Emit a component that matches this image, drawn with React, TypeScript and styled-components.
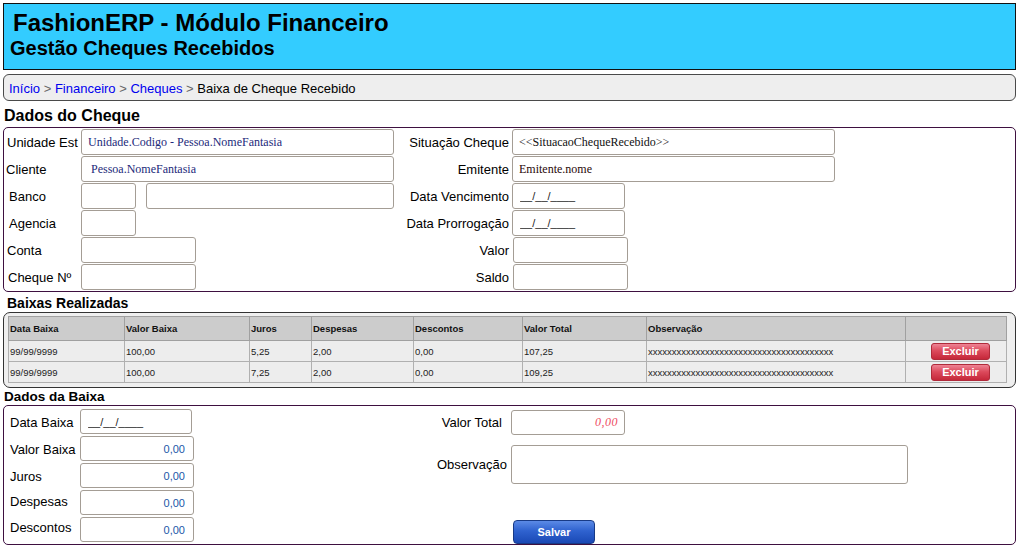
import React from "react";
import styled, { createGlobalStyle, css } from "styled-components";

const GlobalStyle = createGlobalStyle`
  html, body { margin: 0; padding: 0; overflow: hidden; background: #fff; }
  body {
    margin: 3px 0 0 3px;
    font-family: "Liberation Sans", Arial, sans-serif;
    font-size: 13px;
    color: #000;
  }
  * { box-sizing: border-box; }
`;

const Page = styled.div`
  width: 1013px;
  display: flex;
  flex-direction: column;
`;

const Header = styled.header`
  height: 67px;
  background: #33ccff;
  border: 1px solid #111;
  padding: 5px 0 0 6px;
`;

const Title = styled.h1`
  margin: 0 0 0 3px;
  font-size: 24px;
  line-height: 28px;
  font-weight: bold;
`;

const Subtitle = styled.h2`
  margin: 0;
  font-size: 20px;
  line-height: 22px;
  font-weight: bold;
`;

const Breadcrumb = styled.nav`
  margin-top: 4px;
  height: 27px;
  background: #eeeeee;
  border: 1px solid #4a4a4a;
  border-radius: 6px;
  padding: 3px 0 0 5px;
  line-height: 22px;
  font-size: 13px;
  white-space: pre;
`;

const Crumb = styled.a`
  color: #0000ee;
  text-decoration: none;
`;

const Sep = styled.span`
  color: #666;
`;

const SectionTitle = styled.h3<{ $size: number; $pt: number; $lh: number; $pl: number; $h: number }>`
  margin: 0;
  height: ${(p) => p.$h}px;
  font-size: ${(p) => p.$size}px;
  line-height: ${(p) => p.$lh}px;
  padding: ${(p) => p.$pt}px 0 0 ${(p) => p.$pl}px;
  font-weight: bold;
`;

const Panel = styled.section<{ $tone?: "purple" | "gray" }>`
  border: 1px solid #3e1040;
  border-radius: 5px;
  ${(p) =>
    p.$tone === "gray" &&
    css`
      border-color: #333;
      border-radius: 7px;
      background: #efefef;
      padding: 3px 0 4px 4px;
    `}
`;

const ChequeGrid = styled.div`
  display: grid;
  grid-template-columns: 77px 322px 109px 1fr;
  grid-auto-rows: 27px;
  padding-top: 1px;
`;

const FieldLabel = styled.label<{ $align?: "left" | "right"; $indent?: number; $pr?: number; $lift?: number }>`
  display: flex;
  align-items: center;
  justify-content: ${(p) => (p.$align === "right" ? "flex-end" : "flex-start")};
  padding-left: ${(p) => p.$indent ?? 0}px;
  padding-right: ${(p) => p.$pr ?? 0}px;
  height: 26px;
  margin-top: ${(p) => -(p.$lift ?? 0)}px;
  font-size: 13px;
  white-space: nowrap;
`;

const FieldCell = styled.div`
  display: flex;
  gap: 10px;
  align-items: flex-start;
`;

const TextBox = styled.input<{ $w: number; $h?: number; $shift?: number; $tone?: string; $num?: boolean; $serif?: boolean; $date?: boolean }>`
  width: ${(p) => p.$w}px;
  height: ${(p) => p.$h ?? 26}px;
  margin-left: ${(p) => p.$shift ?? 0}px;
  border: 1px solid #a49d95;
  border-radius: 3px;
  background: #fff;
  padding: 0 6px;
  outline: none;
  color: ${(p) => p.$tone ?? "#111"};
  font-family: "Liberation Serif", "Times New Roman", serif;
  font-size: 12px;
  ${(p) =>
    p.$date &&
    css`
      font-family: "Liberation Sans", Arial, sans-serif;
      font-size: 11px;
      padding-left: 7px;
      color: #222;
    `}
  ${(p) =>
    p.$num &&
    css`
      font-family: "Liberation Sans", Arial, sans-serif;
      font-size: 11px;
      text-align: right;
      padding-right: 8px;
      color: #1a58a8;
    `}
  ${(p) =>
    p.$serif &&
    css`
      font-family: "Liberation Serif", "Times New Roman", serif;
      font-style: italic;
      font-size: 12px;
      text-align: right;
      padding-right: 6px;
      color: #ee4d63;
      letter-spacing: 0.5px;
    `}
`;

const Notes = styled.textarea`
  width: 397px;
  height: 39px;
  border: 1px solid #a49d95;
  border-radius: 3px;
  resize: none;
  outline: none;
  margin-top: 9px;
`;

const Table = styled.table`
  width: 999px;
  border-collapse: collapse;
  table-layout: fixed;
  font-family: "Liberation Sans", Arial, sans-serif;
  font-size: 9.5px;
  color: #222;
  border: 1px solid #999;
`;

const Col = styled.col<{ $w: number }>`
  width: ${(p) => p.$w}px;
`;

const HeadCell = styled.th`
  height: 24px;
  background: #cccccc;
  border: 1px solid #a0a0a0;
  text-align: left;
  font-weight: bold;
  padding: 0 1px;
  color: #111;
`;

const Cell = styled.td`
  height: 21px;
  background: #ededed;
  border: 1px solid #b0b0b0;
  padding: 0 1px;
  white-space: nowrap;
  overflow: hidden;
`;

const ActionCell = styled(Cell)`
  text-align: center;
  padding-left: 10px;
`;

const DangerButton = styled.button`
  width: 59px;
  height: 17px;
  border: 1px solid #b02a3a;
  border-radius: 3px;
  background: linear-gradient(#ee8494 0%, #dc4a5c 45%, #c5283a 100%);
  color: #fff;
  font-family: "Liberation Sans", Arial, sans-serif;
  font-weight: bold;
  font-size: 11px;
  line-height: 15px;
  padding: 0;
  vertical-align: middle;
`;

const BaixaLayout = styled.div`
  display: flex;
`;

const BaixaLeft = styled.div`
  width: 407px;
  display: grid;
  grid-template-columns: 76px auto;
  grid-auto-rows: 27px;
  padding-top: 3px;
  justify-items: start;
`;

const BaixaRight = styled.div`
  display: grid;
  grid-template-columns: 100px auto;
  align-items: center;
  justify-items: start;
  padding-top: 4px;
`;

const RightLabel = styled.span<{ $pr: number; $mt?: number }>`
  justify-self: end;
  padding-right: ${(p) => p.$pr}px;
  margin-top: ${(p) => p.$mt ?? 0}px;
  font-size: 13px;
`;

const PrimaryButton = styled.button`
  grid-column: 2;
  margin: 35px 0 0 2px;
  width: 82px;
  height: 24px;
  border: 1px solid #183a86;
  border-radius: 4px;
  background: linear-gradient(#5b8ae6 0%, #2f62cf 45%, #1a49b5 100%);
  color: #fff;
  font-family: "Liberation Sans", Arial, sans-serif;
  font-weight: bold;
  font-size: 11px;
  padding: 0;
`;

const rows = [
  { data: "99/99/9999", valor: "100,00", juros: "5,25", desp: "2,00", desc: "0,00", total: "107,25" },
  { data: "99/99/9999", valor: "100,00", juros: "7,25", desp: "2,00", desc: "0,00", total: "109,25" },
];

const obs = "x".repeat(39);

export default function App() {
  return (
    <>
      <GlobalStyle />
      <Page>
        <Header>
          <Title>FashionERP - Módulo Financeiro</Title>
          <Subtitle>Gestão Cheques Recebidos</Subtitle>
        </Header>

        <Breadcrumb>
          <Crumb href="#">Início</Crumb>
          <Sep>{" > "}</Sep>
          <Crumb href="#">Financeiro</Crumb>
          <Sep>{" > "}</Sep>
          <Crumb href="#">Cheques</Crumb>
          <Sep>{" > "}</Sep>
          <span>Baixa de Cheque Recebido</span>
        </Breadcrumb>

        <SectionTitle $size={16} $pt={3} $lh={23} $pl={1} $h={26}>Dados do Cheque</SectionTitle>
        <Panel>
          <ChequeGrid>
            <FieldLabel $indent={3}>Unidade Est</FieldLabel>
            <FieldCell>
              <TextBox $w={313} $tone="#1c2a7a" readOnly defaultValue="Unidade.Codigo - Pessoa.NomeFantasia" />
            </FieldCell>
            <FieldLabel $align="right" $pr={3}>Situação Cheque</FieldLabel>
            <FieldCell>
              <TextBox $w={323} readOnly defaultValue="<<SituacaoChequeRecebido>>" />
            </FieldCell>

            <FieldLabel $indent={2}>Cliente</FieldLabel>
            <FieldCell>
              <TextBox $w={313} $tone="#1c2a7a" readOnly defaultValue=" Pessoa.NomeFantasia" />
            </FieldCell>
            <FieldLabel $align="right" $pr={3}>Emitente</FieldLabel>
            <FieldCell>
              <TextBox $w={323} $tone="#2a0808" readOnly defaultValue="Emitente.nome" />
            </FieldCell>

            <FieldLabel $indent={5}>Banco</FieldLabel>
            <FieldCell>
              <TextBox $w={55} readOnly />
              <TextBox $w={248} readOnly />
            </FieldCell>
            <FieldLabel $align="right" $pr={3}>Data Vencimento</FieldLabel>
            <FieldCell>
              <TextBox $w={113} $date readOnly defaultValue="__/__/____" />
            </FieldCell>

            <FieldLabel $indent={5}>Agencia</FieldLabel>
            <FieldCell>
              <TextBox $w={55} readOnly />
            </FieldCell>
            <FieldLabel $align="right" $pr={3}>Data Prorrogação</FieldLabel>
            <FieldCell>
              <TextBox $w={113} $date readOnly defaultValue="__/__/____" />
            </FieldCell>

            <FieldLabel $indent={3}>Conta</FieldLabel>
            <FieldCell>
              <TextBox $w={115} readOnly />
            </FieldCell>
            <FieldLabel $align="right" $pr={3}>Valor</FieldLabel>
            <FieldCell>
              <TextBox $w={115} $shift={1} readOnly />
            </FieldCell>

            <FieldLabel $indent={4}>Cheque Nº</FieldLabel>
            <FieldCell>
              <TextBox $w={115} readOnly />
            </FieldCell>
            <FieldLabel $align="right" $pr={3}>Saldo</FieldLabel>
            <FieldCell>
              <TextBox $w={115} $shift={1} readOnly />
            </FieldCell>
          </ChequeGrid>
        </Panel>

        <SectionTitle $size={14} $pt={2} $lh={18} $pl={4} $h={20}>Baixas Realizadas</SectionTitle>
        <Panel $tone="gray">
          <Table>
            <colgroup>
              <Col $w={116} />
              <Col $w={125} />
              <Col $w={62} />
              <Col $w={102} />
              <Col $w={109} />
              <Col $w={124} />
              <Col $w={259} />
              <Col $w={101} />
            </colgroup>
            <thead>
              <tr>
                <HeadCell>Data Baixa</HeadCell>
                <HeadCell>Valor Baixa</HeadCell>
                <HeadCell>Juros</HeadCell>
                <HeadCell>Despesas</HeadCell>
                <HeadCell>Descontos</HeadCell>
                <HeadCell>Valor Total</HeadCell>
                <HeadCell>Observação</HeadCell>
                <HeadCell></HeadCell>
              </tr>
            </thead>
            <tbody>
              {rows.map((r, i) => (
                <tr key={i}>
                  <Cell>{r.data}</Cell>
                  <Cell>{r.valor}</Cell>
                  <Cell>{r.juros}</Cell>
                  <Cell>{r.desp}</Cell>
                  <Cell>{r.desc}</Cell>
                  <Cell>{r.total}</Cell>
                  <Cell>{obs}</Cell>
                  <ActionCell>
                    <DangerButton type="button">Excluir</DangerButton>
                  </ActionCell>
                </tr>
              ))}
            </tbody>
          </Table>
        </Panel>

        <SectionTitle $size={13.5} $pt={1} $lh={16} $pl={1} $h={17}>Dados da Baixa</SectionTitle>
        <Panel>
          <BaixaLayout>
            <BaixaLeft>
              <FieldLabel $indent={6}>Data Baixa</FieldLabel>
              <TextBox $w={112} $h={25} $date readOnly defaultValue="__/__/____" />
              <FieldLabel $indent={6}>Valor Baixa</FieldLabel>
              <TextBox $w={114} $h={25} $num readOnly defaultValue="0,00" />
              <FieldLabel $indent={6}>Juros</FieldLabel>
              <TextBox $w={114} $h={25} $num readOnly defaultValue="0,00" />
              <FieldLabel $indent={6} $lift={2}>Despesas</FieldLabel>
              <TextBox $w={114} $h={25} $num readOnly defaultValue="0,00" />
              <FieldLabel $indent={6} $lift={3}>Descontos</FieldLabel>
              <TextBox $w={114} $h={25} $num readOnly defaultValue="0,00" />
            </BaixaLeft>
            <BaixaRight>
              <RightLabel $pr={9}>Valor Total</RightLabel>
              <TextBox $w={114} $h={25} $serif readOnly defaultValue="0,00" />
              <RightLabel $pr={4} $mt={9}>Observação</RightLabel>
              <Notes readOnly />
              <PrimaryButton type="button">Salvar</PrimaryButton>
            </BaixaRight>
          </BaixaLayout>
        </Panel>
      </Page>
    </>
  );
}
